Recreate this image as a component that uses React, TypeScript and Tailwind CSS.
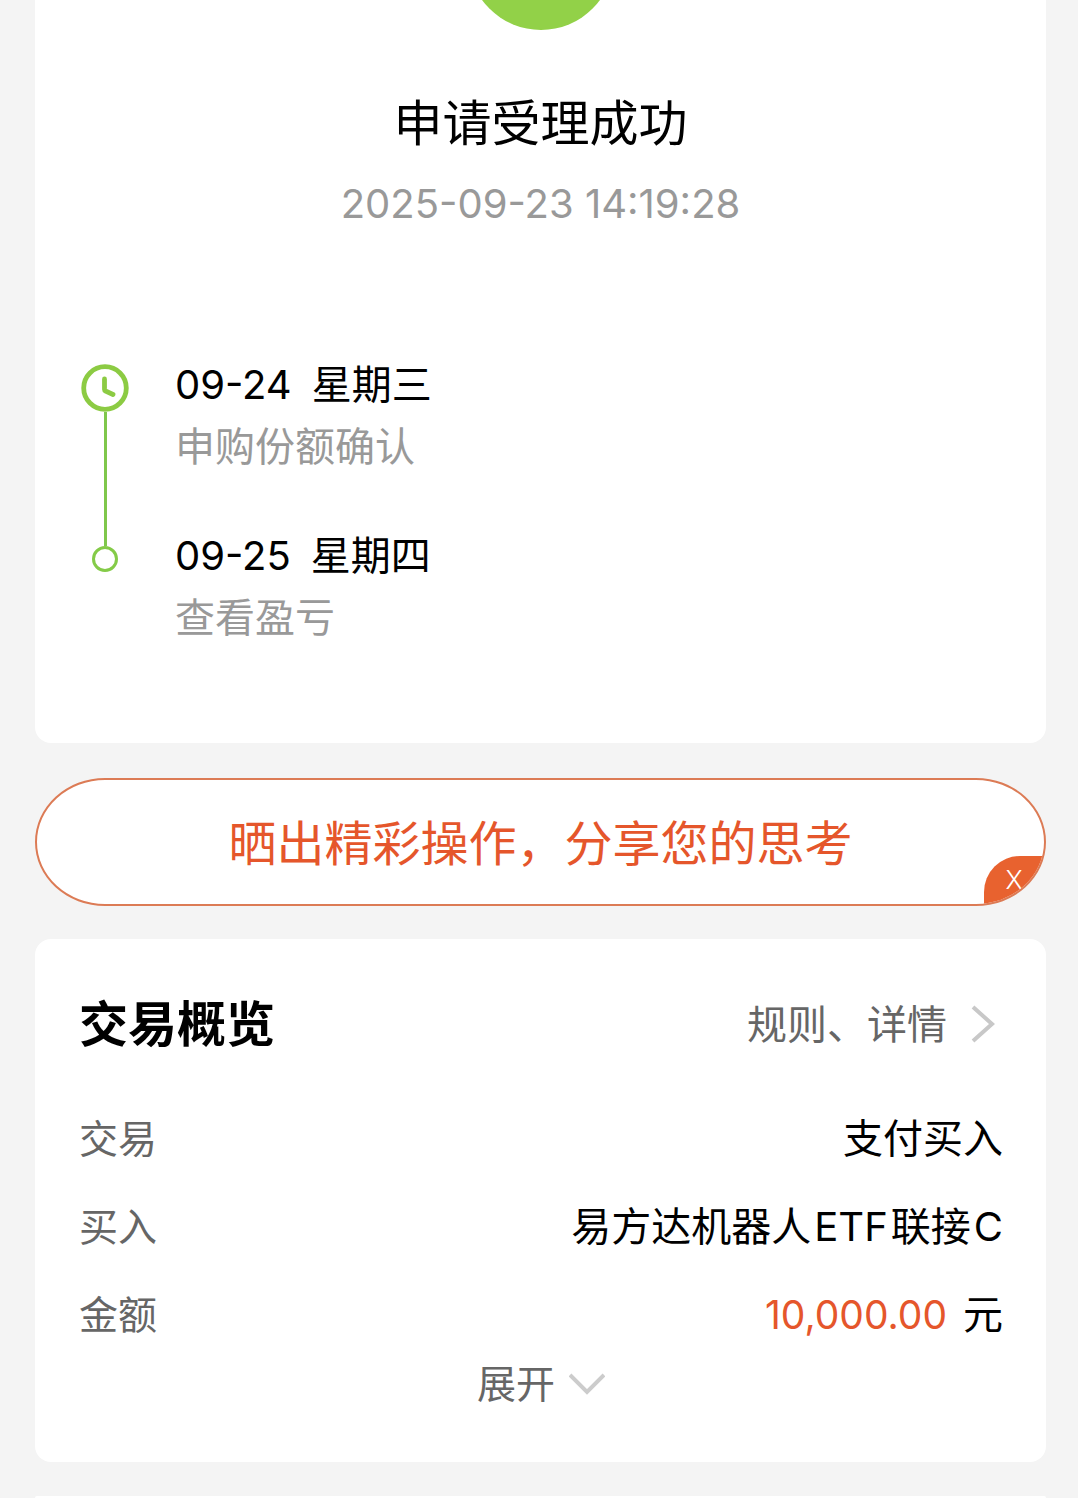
import React from "react";

type Step = { date: string; weekday: string; label: string };

const steps: Step[] = [
  { date: "09-24", weekday: "星期三", label: "申购份额确认" },
  { date: "09-25", weekday: "星期四", label: "查看盈亏" },
];

function ClockIcon() {
  return (
    <svg width="48" height="48" viewBox="0 0 48 48" fill="none" stroke="#8ccb43" aria-hidden="true" className="block">
      <circle cx="24" cy="24" r="21.3" strokeWidth="4.8" />
      <path d="M23.5 15v10.5q0 1 1 1.5l7.5 3.5" strokeWidth="4.8" strokeLinecap="round" strokeLinejoin="round" />
    </svg>
  );
}

function Timeline() {
  return (
    <div className="mt-[120px] flex pl-[46px]">
      <div className="flex w-12 flex-col items-center pt-[10px]">
        <ClockIcon />
        <span className="h-[134px] w-[3px] bg-[#7fc74b]" />
        <span className="size-[26px] rounded-full border-[3px] border-[#84cb48]" />
      </div>
      <ol className="ml-[46px] flex flex-col gap-[47px]">
        {steps.map((s) => (
          <li key={s.date}>
            <p className="flex gap-5 leading-[62px] text-black">
              <time>{s.date}</time>
              <span>{s.weekday}</span>
            </p>
            <p className="leading-[62px] text-[#999999]">{s.label}</p>
          </li>
        ))}
      </ol>
    </div>
  );
}

function Row({ name, children }: { name: string; children: React.ReactNode }) {
  return (
    <div className="flex items-center justify-between leading-[88px]">
      <dt className="text-[39px] text-[#666666]">{name}</dt>
      <dd className="text-black">{children}</dd>
    </div>
  );
}

export default function App() {
  return (
    <main className="min-h-screen overflow-hidden bg-[#f4f4f4] pr-8 pl-[35px] font-['Inter','Noto_Sans_CJK_SC',sans-serif] text-[40px]">
      <section className="rounded-b-2xl bg-white pb-[94px]">
        <div className="flex h-[30px] items-end justify-center overflow-hidden">
          <span className="size-[146px] shrink-0 rounded-full bg-[#92d148]" />
        </div>
        <h1 className="mt-[58px] text-center text-[49px] leading-[72px] text-black">申请受理成功</h1>
        <p className="mt-[14px] text-center leading-[60px] text-[#999999]">2025-09-23 14:19:28</p>
        <Timeline />
      </section>

      <div className="relative mt-[35px] overflow-hidden rounded-[70px/64px] border-2 border-[#dc7b55] bg-white">
        <button type="button" className="block w-full pt-1 text-center text-[48px] leading-[120px] text-[#e5562b]">
          晒出精彩操作，分享您的思考
        </button>
        <button
          type="button"
          aria-label="关闭"
          className="absolute right-0 bottom-0 h-12 w-[60px] rounded-tl-[36px] bg-[#e8622f] text-center text-[26px] leading-[48px] font-light text-white"
        >
          X
        </button>
      </div>

      <section className="mt-[33px] rounded-2xl bg-white pt-[46px] pr-[43px] pb-[53px] pl-11">
        <div className="mb-[30px] flex items-center justify-between leading-[80px]">
          <h2 className="text-[49px] font-bold text-black">交易概览</h2>
          <a href="#details" className="flex items-center gap-6 pr-2 text-[#666666]">
            规则、详情
            <svg width="24" height="40" viewBox="0 0 24 40" fill="none" stroke="#c8c8c8" strokeWidth="4" aria-hidden="true">
              <path d="M2 2l19 17L2 36" />
            </svg>
          </a>
        </div>
        <dl>
          <Row name="交易">支付买入</Row>
          <Row name="买入">
            易方达机器人<span className="mx-[3px]">ETF</span>联接<span className="ml-[3px]">C</span>
          </Row>
          <Row name="金额">
            <span className="mr-4 text-[39px] text-[#e5562b]">10,000.00</span>元
          </Row>
        </dl>
        <button type="button" className="mx-auto flex items-center gap-[14px] text-[39px] leading-[50px] text-[#666666]">
          展开
          <svg width="36" height="22" viewBox="0 0 36 22" fill="none" stroke="#cccccc" strokeWidth="4" aria-hidden="true">
            <path d="M1 2l17 17L35 2" />
          </svg>
        </button>
      </section>

      <section className="mt-[34px] h-0.5 rounded-t-2xl bg-white" />
    </main>
  );
}
